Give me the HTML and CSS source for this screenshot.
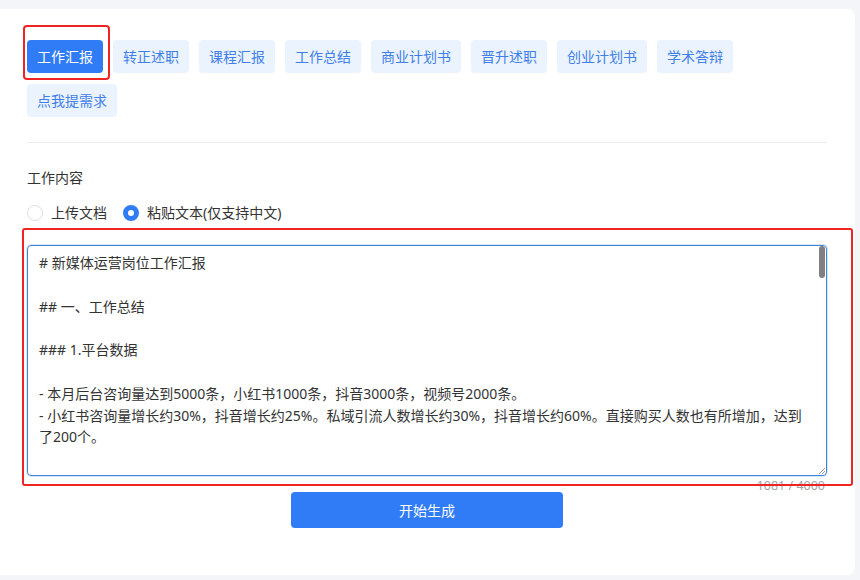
FILE: index.html
```html
<!DOCTYPE html>
<html lang="zh-CN">
<head>
<meta charset="utf-8">
<title>工作汇报</title>
<link rel="stylesheet" href="styles.css">
</head>
<body>
<div class="card">
  <div class="tabs">
    <span class="tab active">工作汇报</span>
    <span class="tab">转正述职</span>
    <span class="tab">课程汇报</span>
    <span class="tab">工作总结</span>
    <span class="tab">商业计划书</span>
    <span class="tab">晋升述职</span>
    <span class="tab">创业计划书</span>
    <span class="tab">学术答辩</span>
    <span class="tab">点我提需求</span>
  </div>
  <div class="divider"></div>
  <div class="label">工作内容</div>
  <div class="radios">
    <label class="radio"><span class="dot"></span>上传文档</label>
    <label class="radio checked"><span class="dot"></span>粘贴文本(仅支持中文)</label>
  </div>
  <div class="editor">
    <div class="text">
      <div class="line"># 新媒体运营岗位工作汇报</div>
      <div class="line blank"></div>
      <div class="line">## 一、工作总结</div>
      <div class="line blank"></div>
      <div class="line">### 1.平台数据</div>
      <div class="line blank"></div>
      <div class="line">- 本月后台咨询量达到5000条，小红书1000条，抖音3000条，视频号2000条。</div>
      <div class="line">- 小红书咨询量增长约30%，抖音增长约25%。私域引流人数增长约30%，抖音增长约60%。直接购买人数也有所增加，达到<br>了200个。</div>
    </div>
    <span class="thumb"></span>
    <span class="grip"></span>
  </div>
  <div class="counter">1081 / 4000</div>
  <div class="actions"><button class="submit">开始生成</button></div>
  <span class="mark mark-tab"></span>
  <span class="mark mark-editor"></span>
</div>
</body>
</html>
```

FILE: styles.css
```css
* { box-sizing: border-box; }
html, body { margin: 0; padding: 0; }
body {
  background: #f3f5f8;
  font-family: "Noto Sans", "Noto Sans CJK SC", sans-serif;
  color: #333;
  font-size: 14px;
  width: 860px;
  height: 580px;
  overflow: hidden;
}
.card {
  position: relative;
  margin-top: 9px;
  width: 855px;
  height: 566px;
  background: #fff;
  border-radius: 0 8px 8px 0;
  padding: 31px 28px 0 27px;
}
.tabs {
  display: flex;
  flex-wrap: wrap;
  column-gap: 10px;
  row-gap: 11px;
}
.tab {
  height: 33px;
  line-height: 33px;
  padding: 0 10px;
  border-radius: 4px;
  background: #ebf3fe;
  color: #3f80e8;
  font-size: 14px;
}
.tab.active { background: #2f7cf6; color: #fff; }
.divider {
  height: 1px;
  background: #ebeef3;
  margin-top: 25px;
}
.label {
  margin-top: 25px;
  line-height: 20px;
  color: #333;
}
.radios {
  margin-top: 15px;
  display: flex;
  gap: 16px;
  line-height: 20px;
}
.radio { display: flex; align-items: center; gap: 8px; color: #333; }
.dot {
  width: 16px;
  height: 16px;
  border-radius: 50%;
  border: 1px solid #dcdfe6;
  background: #fff;
}
.radio.checked .dot {
  border: 5px solid #2f7cf6;
}
.editor {
  position: relative;
  margin-top: 22px;
  height: 231px;
  border: 1px solid #3d84d6;
  border-radius: 4px;
  box-shadow: 0 0 0 1px #d6e7fa;
  padding: 6px 20px 0 11px;
  overflow: hidden;
}
.line { line-height: 21.8px; min-height: 21.8px; color: #333; }
.thumb {
  position: absolute;
  right: 1px;
  top: 0;
  width: 6px;
  height: 32px;
  border-radius: 3px;
  background: #808080;
}
.grip {
  position: absolute;
  right: 1px;
  bottom: 1px;
  width: 6px;
  height: 6px;
  background: linear-gradient(135deg, transparent 45%, #999 45%, #999 55%, transparent 55%, transparent 70%, #999 70%, #999 80%, transparent 80%);
}
.counter {
  text-align: right;
  font-size: 12.5px;
  line-height: 16px;
  color: #a3a3a3;
  margin-top: 2px;
  padding-right: 2px;
}
.actions { display: flex; justify-content: center; margin-top: -2px; }
.submit {
  width: 272px;
  height: 36px;
  border: 0;
  border-radius: 4px;
  background: #2f7cf6;
  color: #fff;
  font-family: inherit;
  font-size: 14px;
}
.mark {
  position: absolute;
  border: 2.5px solid #f02323;
  border-radius: 4px;
}
.mark-tab { left: 23px; top: 16px; width: 87px; height: 55px; }
.mark-editor { left: 22px; top: 219px; width: 831px; height: 258px; border-radius: 3px; }
```
